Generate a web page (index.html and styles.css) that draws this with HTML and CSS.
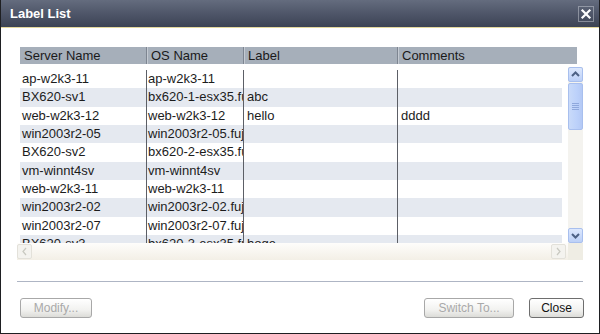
FILE: index.html
```html
<!DOCTYPE html>
<html lang="en">
<head>
  <meta charset="UTF-8" />
  <title>Label List</title>
  <link rel="stylesheet" href="styles.css">
</head>
<body>
  <div class="dialog">
    <div class="titlebar">
      <span class="title">Label List</span>
      <span class="close-x">
        <svg width="16" height="16" viewBox="0 0 16 16">
          <rect x="0.5" y="0.5" width="15" height="15" fill="none" stroke="#c9ccd4" stroke-dasharray="1 1"/>
          <path d="M4.5 4.5 L11.5 11.5 M11.5 4.5 L4.5 11.5" stroke="#fff" stroke-width="2.2" stroke-linecap="square"/>
        </svg>
      </span>
    </div>

    <div class="content">
      <div class="list">
        <div class="list-head">
          <div class="hcell">Server Name</div>
          <div class="hcell">OS Name</div>
          <div class="hcell">Label</div>
          <div class="hcell">Comments</div>
        </div>

        <div class="list-body">
          <div class="rows">
            <div class="row"><div class="cell">ap-w2k3-11</div><div class="cell">ap-w2k3-11</div><div class="cell"></div><div class="cell"></div></div>
            <div class="row"><div class="cell">BX620-sv1</div><div class="cell">bx620-1-esx35.fujitsu.com</div><div class="cell">abc</div><div class="cell"></div></div>
            <div class="row"><div class="cell">web-w2k3-12</div><div class="cell">web-w2k3-12</div><div class="cell">hello</div><div class="cell">dddd</div></div>
            <div class="row"><div class="cell">win2003r2-05</div><div class="cell">win2003r2-05.fujitsu.com</div><div class="cell"></div><div class="cell"></div></div>
            <div class="row"><div class="cell">BX620-sv2</div><div class="cell">bx620-2-esx35.fujitsu.com</div><div class="cell"></div><div class="cell"></div></div>
            <div class="row"><div class="cell">vm-winnt4sv</div><div class="cell">vm-winnt4sv</div><div class="cell"></div><div class="cell"></div></div>
            <div class="row"><div class="cell">web-w2k3-11</div><div class="cell">web-w2k3-11</div><div class="cell"></div><div class="cell"></div></div>
            <div class="row"><div class="cell">win2003r2-02</div><div class="cell">win2003r2-02.fujitsu.com</div><div class="cell"></div><div class="cell"></div></div>
            <div class="row"><div class="cell">win2003r2-07</div><div class="cell">win2003r2-07.fujitsu.com</div><div class="cell"></div><div class="cell"></div></div>
            <div class="row"><div class="cell">BX620-sv3</div><div class="cell">bx620-3-esx35.fujitsu.com</div><div class="cell">hoge</div><div class="cell"></div></div>
            <div class="row"><div class="cell">win2003r2-08</div><div class="cell">win2003r2-08.fujitsu.com</div><div class="cell"></div><div class="cell"></div></div>
          </div>

          <div class="vscroll">
            <div class="sbtn">
              <svg width="15" height="15" viewBox="0 0 15 15"><path d="M4 9 L7.5 5.5 L11 9" fill="none" stroke="#4d6185" stroke-width="2"/></svg>
            </div>
            <div class="thumb">
              <svg width="7" height="8" viewBox="0 0 7 8"><path d="M0 0.5H7M0 2.5H7M0 4.5H7M0 6.5H7" stroke="#8fa8dc" stroke-width="1"/></svg>
            </div>
            <div class="track"></div>
            <div class="sbtn">
              <svg width="15" height="15" viewBox="0 0 15 15"><path d="M4 6 L7.5 9.5 L11 6" fill="none" stroke="#4d6185" stroke-width="2"/></svg>
            </div>
          </div>
        </div>

        <div class="hscroll">
          <div class="hbtn">
            <svg width="15" height="15" viewBox="0 0 15 15"><path d="M9 4 L6 7.5 L9 11" fill="none" stroke="#c8c8c0" stroke-width="1.2"/></svg>
          </div>
          <div class="htrack"></div>
          <div class="hbtn">
            <svg width="15" height="15" viewBox="0 0 15 15"><path d="M6 4 L9 7.5 L6 11" fill="none" stroke="#c8c8c0" stroke-width="1.2"/></svg>
          </div>
          <div class="corner"></div>
        </div>
      </div>

      <div class="separator"></div>

      <div class="buttons">
        <button class="btn disabled">Modify...</button>
        <div class="spacer"></div>
        <button class="btn wide disabled">Switch To...</button>
        <button class="btn close">Close</button>
      </div>
    </div>
  </div>
</body>
</html>
```

FILE: styles.css
```css
body {
  margin: 0;
  font-family: 'Liberation Sans', Arial, sans-serif;
  background: #fff;
}

.dialog {
  width: 600px;
  height: 334px;
  box-sizing: border-box;
  border: 1px solid #1e1f22;
  border-top: none;
  display: flex;
  flex-direction: column;
  background: #fff;
}

.titlebar {
  height: 27px;
  border-bottom: 1px solid #e3d79d;
  background: linear-gradient(#646c7e, #4f5669 50%, #3c4354);
  display: flex;
  align-items: center;
  padding: 0 5px 0 9px;
}

.title {
  color: #fff;
  font-weight: bold;
  font-size: 13px;
  flex: 1;
}

.close-x {
  width: 16px;
  height: 16px;
  margin-top: 1px;
}

.content {
  flex: 1;
  padding: 16px 15px 0 16px;
  display: flex;
  flex-direction: column;
}

.list {
  width: 566px;
  display: flex;
  flex-direction: column;
}

.list-head {
  margin: 3px 6px 0 3px;
  height: 17px;
  background: #a6afba;
  display: grid;
  grid-template-columns: 127px 97px 154px 180px;
  font-size: 13px;
  color: #1a1a1a;
}

.hcell {
  padding-left: 4px;
  line-height: 17px;
  border-right: 1px solid #7d8591;
  box-shadow: inset 1px 0 #c4cad2;
  white-space: nowrap;
  overflow: hidden;
}

.hcell:first-child {
  box-shadow: none;
}

.hcell:last-child {
  border-right: none;
}

.list-body {
  display: flex;
  margin-top: 3px;
  height: 176px;
}

.rows {
  width: 542px;
  margin-left: 3px;
  padding-top: 3px;
  overflow: hidden;
}

.row {
  display: grid;
  grid-template-columns: 127px 97px 154px 164px;
  height: 18.33px;
  font-size: 13px;
  color: #1c1c1c;
}

.row:nth-child(even) {
  background: #e5e9f0;
}

.cell {
  padding-left: 2px;
  line-height: 18px;
  white-space: nowrap;
  overflow: hidden;
  border-right: 1px solid #5c5f66;
}

.cell:nth-child(2) {
  padding-left: 1px;
}

.cell:nth-child(n+3) {
  padding-left: 3px;
}

.cell:last-child {
  border-right: none;
}

.vscroll {
  width: 15px;
  margin-left: 6px;
  display: flex;
  flex-direction: column;
  background: #f4f3ef;
}

.sbtn {
  height: 15px;
  box-sizing: border-box;
  border: 1px solid #a8bfee;
  border-radius: 2px;
  background: linear-gradient(#dde8fd, #bcd0f7);
}

.sbtn svg {
  display: block;
  margin: -1px;
}

.thumb {
  height: 47px;
  margin-top: 1px;
  box-sizing: border-box;
  border: 1px solid #a8bfee;
  border-radius: 2px;
  background: linear-gradient(90deg, #c9daf9, #bcd1fa 60%, #b4c9f5);
  display: flex;
  align-items: center;
  justify-content: center;
}

.track {
  flex: 1;
}

.hscroll {
  display: flex;
  height: 17px;
  background: linear-gradient(#fefdfb, #f3efe6);
}

.hbtn {
  width: 15px;
  height: 15px;
  margin-top: 1px;
  box-sizing: border-box;
  border: 1px solid #e3e1da;
  border-radius: 2px;
  background: #f4f3ef;
}

.hbtn svg {
  display: block;
  margin: -1px;
}

.htrack {
  flex: 1;
}

.corner {
  width: 15px;
  margin-left: 2px;
  background: #efede4;
}

.separator {
  height: 1px;
  width: 566px;
  background: #aeb5c4;
  margin-top: 21px;
}

.buttons {
  display: flex;
  align-items: center;
  margin-top: 16px;
  padding-left: 3px;
  width: 564px;
}

.spacer {
  flex: 1;
}

.btn {
  height: 20px;
  width: 72px;
  font-family: 'Liberation Sans', Arial, sans-serif;
  font-size: 12px;
  color: #111;
  padding: 0;
  border: 1px solid #6e6e6e;
  border-radius: 3px;
  background: linear-gradient(#ffffff, #f2f2f0 60%, #dcdcd8);
}

.btn.wide {
  width: 90px;
}

.btn.close {
  width: 55px;
  margin-left: 15px;
}

.btn.disabled {
  color: #a9a9a9;
  border-color: #a8a8a8;
}
```
